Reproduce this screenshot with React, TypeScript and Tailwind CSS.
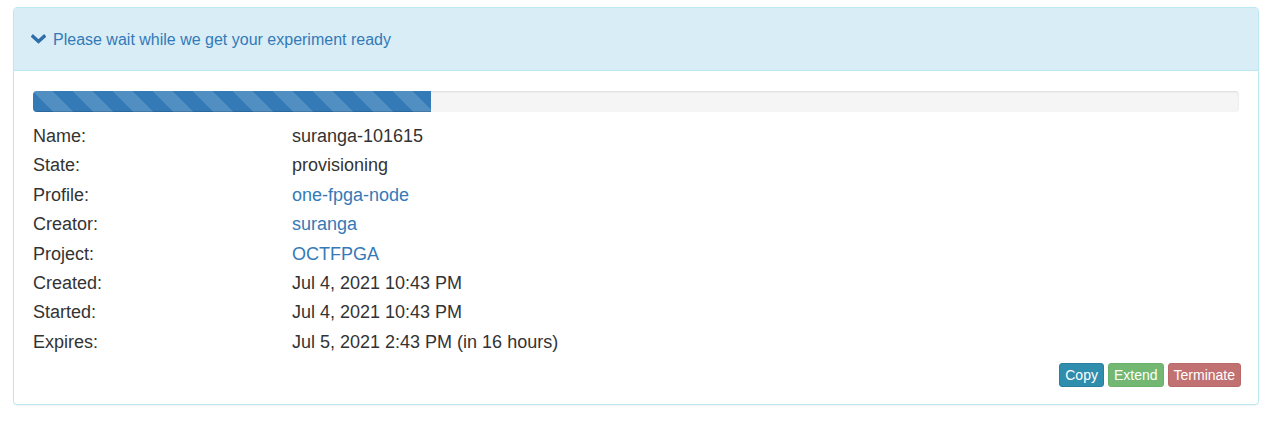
const rows: { label: string; value: string; link?: boolean }[] = [
  { label: 'Name:', value: 'suranga-101615' },
  { label: 'State:', value: 'provisioning' },
  { label: 'Profile:', value: 'one-fpga-node', link: true },
  { label: 'Creator:', value: 'suranga', link: true },
  { label: 'Project:', value: 'OCTFPGA', link: true },
  { label: 'Created:', value: 'Jul 4, 2021 10:43 PM' },
  { label: 'Started:', value: 'Jul 4, 2021 10:43 PM' },
  { label: 'Expires:', value: 'Jul 5, 2021 2:43 PM (in 16 hours)' },
]

export default function App() {
  return (
    <div className="min-h-[430px] bg-white pt-[7px] pl-[13px] font-['Liberation_Sans',Arial,sans-serif] text-[#333]">
      <div className="w-[1246px] rounded border border-[#bce8f1] bg-white shadow-[0_1px_1px_rgba(0,0,0,0.05)]">
        <div className="flex h-[63px] items-center gap-[7px] rounded-t-[3px] border-b border-[#bce8f1] bg-[#d9edf7] pt-[2px] pl-[17px] text-[16px] text-[#337ab7]">
          <svg width="15" height="10" viewBox="0 0 15 10" className="mt-[-2px]">
            <polyline
              points="2,2.5 7.5,7.5 13,2.5"
              fill="none"
              stroke="#2f6ea8"
              strokeWidth="3.4"
              strokeLinecap="square"
            />
          </svg>
          <span>Please wait while we get your experiment ready</span>
        </div>

        <div className="px-[19px] pt-[20px] pb-[17px]">
          <div className="h-[21px] overflow-hidden rounded bg-[#f5f5f5] shadow-[inset_0_1px_2px_rgba(0,0,0,0.1)]">
            <div className="h-full w-[33%] bg-[#337ab7] bg-[linear-gradient(45deg,rgba(255,255,255,.15)_25%,transparent_25%,transparent_50%,rgba(255,255,255,.15)_50%,rgba(255,255,255,.15)_75%,transparent_75%,transparent)] bg-[length:40px_40px] shadow-[inset_0_-1px_0_rgba(0,0,0,0.15)]" />
          </div>

          <div className="mt-[10px] grid grid-cols-[259px_1fr] text-[18px] leading-[29.4px]">
            {rows.map((r) => (
              <div key={r.label} className="contents">
                <div>{r.label}</div>
                <div className={r.link ? 'text-[#337ab7]' : ''}>{r.value}</div>
              </div>
            ))}
          </div>

          <div className="mt-[6px] mr-[-2px] flex justify-end gap-[4px] text-[14px] leading-[20px] text-white">
            <button className="rounded-[3px] border border-[#2a7f9f] bg-[#2f8dae] px-[5px] py-[1px]">Copy</button>
            <button className="rounded-[3px] border border-[#69b069] bg-[#72b872] px-[5px] py-[1px]">Extend</button>
            <button className="rounded-[3px] border border-[#b86a6a] bg-[#c17171] px-[5px] py-[1px]">Terminate</button>
          </div>
        </div>
      </div>
    </div>
  )
}
